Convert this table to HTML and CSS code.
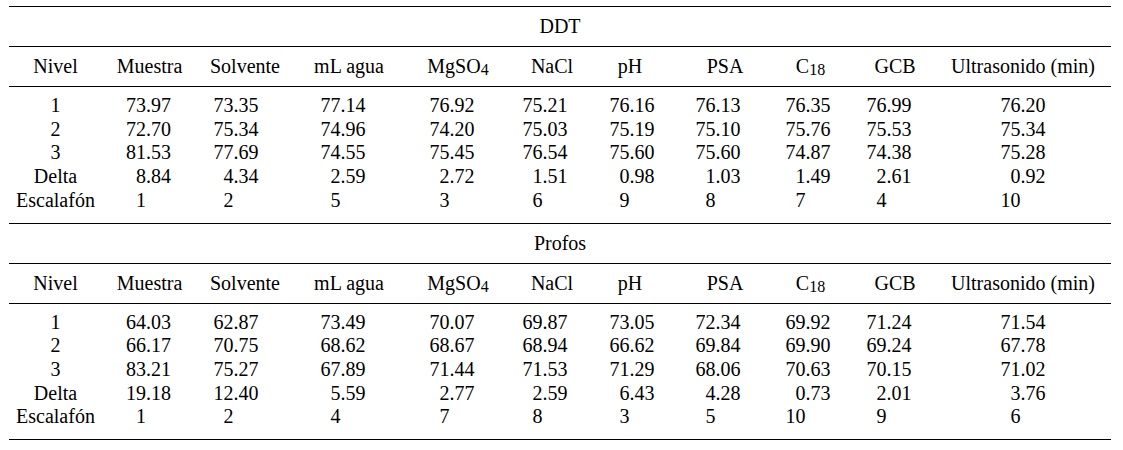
FILE: index.html
```html
<!DOCTYPE html>
<html lang="es">
<head>
<meta charset="utf-8">
<title>DDT y Profos</title>
<link rel="stylesheet" href="styles.css">
</head>
<body>
<div class="wrap">
  <section class="block">
    <div class="cap">DDT</div>
    <div class="hd">
      <span>Nivel</span><span>Muestra</span><span>Solvente</span><span>mL agua</span><span>MgSO<sub>4</sub></span><span>NaCl</span><span>pH</span><span>PSA</span><span>C<sub>18</sub></span><span>GCB</span><span>Ultrasonido (min)</span>
    </div>
    <div class="bd">
      <div class="r"><span>1</span><span><b class="n"><i>73</i><i>.97</i></b></span><span><b class="n"><i>73</i><i>.35</i></b></span><span><b class="n"><i>77</i><i>.14</i></b></span><span><b class="n"><i>76</i><i>.92</i></b></span><span><b class="n"><i>75</i><i>.21</i></b></span><span><b class="n"><i>76</i><i>.16</i></b></span><span><b class="n"><i>76</i><i>.13</i></b></span><span><b class="n"><i>76</i><i>.35</i></b></span><span><b class="n"><i>76</i><i>.99</i></b></span><span><b class="n"><i>76</i><i>.20</i></b></span></div>
      <div class="r"><span>2</span><span><b class="n"><i>72</i><i>.70</i></b></span><span><b class="n"><i>75</i><i>.34</i></b></span><span><b class="n"><i>74</i><i>.96</i></b></span><span><b class="n"><i>74</i><i>.20</i></b></span><span><b class="n"><i>75</i><i>.03</i></b></span><span><b class="n"><i>75</i><i>.19</i></b></span><span><b class="n"><i>75</i><i>.10</i></b></span><span><b class="n"><i>75</i><i>.76</i></b></span><span><b class="n"><i>75</i><i>.53</i></b></span><span><b class="n"><i>75</i><i>.34</i></b></span></div>
      <div class="r"><span>3</span><span><b class="n"><i>81</i><i>.53</i></b></span><span><b class="n"><i>77</i><i>.69</i></b></span><span><b class="n"><i>74</i><i>.55</i></b></span><span><b class="n"><i>75</i><i>.45</i></b></span><span><b class="n"><i>76</i><i>.54</i></b></span><span><b class="n"><i>75</i><i>.60</i></b></span><span><b class="n"><i>75</i><i>.60</i></b></span><span><b class="n"><i>74</i><i>.87</i></b></span><span><b class="n"><i>74</i><i>.38</i></b></span><span><b class="n"><i>75</i><i>.28</i></b></span></div>
      <div class="r"><span>Delta</span><span><b class="n"><i>8</i><i>.84</i></b></span><span><b class="n"><i>4</i><i>.34</i></b></span><span><b class="n"><i>2</i><i>.59</i></b></span><span><b class="n"><i>2</i><i>.72</i></b></span><span><b class="n"><i>1</i><i>.51</i></b></span><span><b class="n"><i>0</i><i>.98</i></b></span><span><b class="n"><i>1</i><i>.03</i></b></span><span><b class="n"><i>1</i><i>.49</i></b></span><span><b class="n"><i>2</i><i>.61</i></b></span><span><b class="n"><i>0</i><i>.92</i></b></span></div>
      <div class="r"><span>Escalafón</span><span><b class="n"><i>1</i><i></i></b></span><span><b class="n"><i>2</i><i></i></b></span><span><b class="n"><i>5</i><i></i></b></span><span><b class="n"><i>3</i><i></i></b></span><span><b class="n"><i>6</i><i></i></b></span><span><b class="n"><i>9</i><i></i></b></span><span><b class="n"><i>8</i><i></i></b></span><span><b class="n"><i>7</i><i></i></b></span><span><b class="n"><i>4</i><i></i></b></span><span><b class="n"><i>10</i><i></i></b></span></div>
    </div>
  </section>
  <section class="block">
    <div class="cap">Profos</div>
    <div class="hd">
      <span>Nivel</span><span>Muestra</span><span>Solvente</span><span>mL agua</span><span>MgSO<sub>4</sub></span><span>NaCl</span><span>pH</span><span>PSA</span><span>C<sub>18</sub></span><span>GCB</span><span>Ultrasonido (min)</span>
    </div>
    <div class="bd">
      <div class="r"><span>1</span><span><b class="n"><i>64</i><i>.03</i></b></span><span><b class="n"><i>62</i><i>.87</i></b></span><span><b class="n"><i>73</i><i>.49</i></b></span><span><b class="n"><i>70</i><i>.07</i></b></span><span><b class="n"><i>69</i><i>.87</i></b></span><span><b class="n"><i>73</i><i>.05</i></b></span><span><b class="n"><i>72</i><i>.34</i></b></span><span><b class="n"><i>69</i><i>.92</i></b></span><span><b class="n"><i>71</i><i>.24</i></b></span><span><b class="n"><i>71</i><i>.54</i></b></span></div>
      <div class="r"><span>2</span><span><b class="n"><i>66</i><i>.17</i></b></span><span><b class="n"><i>70</i><i>.75</i></b></span><span><b class="n"><i>68</i><i>.62</i></b></span><span><b class="n"><i>68</i><i>.67</i></b></span><span><b class="n"><i>68</i><i>.94</i></b></span><span><b class="n"><i>66</i><i>.62</i></b></span><span><b class="n"><i>69</i><i>.84</i></b></span><span><b class="n"><i>69</i><i>.90</i></b></span><span><b class="n"><i>69</i><i>.24</i></b></span><span><b class="n"><i>67</i><i>.78</i></b></span></div>
      <div class="r"><span>3</span><span><b class="n"><i>83</i><i>.21</i></b></span><span><b class="n"><i>75</i><i>.27</i></b></span><span><b class="n"><i>67</i><i>.89</i></b></span><span><b class="n"><i>71</i><i>.44</i></b></span><span><b class="n"><i>71</i><i>.53</i></b></span><span><b class="n"><i>71</i><i>.29</i></b></span><span><b class="n"><i>68</i><i>.06</i></b></span><span><b class="n"><i>70</i><i>.63</i></b></span><span><b class="n"><i>70</i><i>.15</i></b></span><span><b class="n"><i>71</i><i>.02</i></b></span></div>
      <div class="r"><span>Delta</span><span><b class="n"><i>19</i><i>.18</i></b></span><span><b class="n"><i>12</i><i>.40</i></b></span><span><b class="n"><i>5</i><i>.59</i></b></span><span><b class="n"><i>2</i><i>.77</i></b></span><span><b class="n"><i>2</i><i>.59</i></b></span><span><b class="n"><i>6</i><i>.43</i></b></span><span><b class="n"><i>4</i><i>.28</i></b></span><span><b class="n"><i>0</i><i>.73</i></b></span><span><b class="n"><i>2</i><i>.01</i></b></span><span><b class="n"><i>3</i><i>.76</i></b></span></div>
      <div class="r"><span>Escalafón</span><span><b class="n"><i>1</i><i></i></b></span><span><b class="n"><i>2</i><i></i></b></span><span><b class="n"><i>4</i><i></i></b></span><span><b class="n"><i>7</i><i></i></b></span><span><b class="n"><i>8</i><i></i></b></span><span><b class="n"><i>3</i><i></i></b></span><span><b class="n"><i>5</i><i></i></b></span><span><b class="n"><i>10</i><i></i></b></span><span><b class="n"><i>9</i><i></i></b></span><span><b class="n"><i>6</i><i></i></b></span></div>
    </div>
  </section>
</div>
</body>
</html>
```
FILE: styles.css
```css
html, body {
  margin: 0;
  padding: 0;
  background: #fff;
}

body {
  font-family: "Liberation Serif", "Times New Roman", serif;
  font-size: 20px;
  color: #000;
}

.wrap {
  margin: 6px 0 0 9px;
  width: 1102px;
  border-top: 1px solid #000;
}

.block {
  border-bottom: 1px solid #000;
}

.cap {
  height: 39px;
  line-height: 39px;
  text-align: center;
  border-bottom: 1px solid #000;
}

.hd,
.r {
  display: grid;
  grid-template-columns: 93px 95px 100px 106px 102px 86px 86px 91px 85px 92px 166px;
}

.hd {
  height: 39px;
  line-height: 39px;
  border-bottom: 1px solid #000;
}

.hd > span,
.r > span {
  display: block;
  text-align: center;
  white-space: nowrap;
}

.hd sub {
  font-size: 0.8em;
  line-height: 0;
  vertical-align: -0.1em;
}

.bd {
  padding: 7px 0 10px;
}

.r {
  line-height: 23.7px;
}

.n {
  display: inline-flex;
  font-weight: normal;
}

.n > i {
  font-style: normal;
  display: block;
}

.n > i:first-child {
  width: 1em;
  text-align: right;
}

.n > i:last-child {
  width: 1.25em;
  text-align: left;
}

/* header column offsets */
.hd > :nth-child(3) { padding-right: 4px; }
.hd > :nth-child(4) { padding-right: 2px; }
.hd > :nth-child(5) { padding-left: 8px; }
.hd > :nth-child(6) { padding-left: 8px; }
.hd > :nth-child(7) { padding-right: 8px; }
.hd > :nth-child(8) { padding-left: 5px; }
.hd > :nth-child(10) { padding-right: 8px; }
.hd > :nth-child(11) { padding-right: 10px; }

/* data column offsets */
.r > :nth-child(2) { padding-right: 2px; }
.r > :nth-child(3) { padding-right: 22px; }
.r > :nth-child(4) { padding-right: 14px; }
.r > :nth-child(5) { padding-right: 4px; }
.r > :nth-child(6) { padding-right: 6px; }
.r > :nth-child(7) { padding-right: 4px; }
.r > :nth-child(8) { padding-right: 9px; }
.r > :nth-child(9) { padding-right: 5px; }
.r > :nth-child(10) { padding-right: 20px; }
.r > :nth-child(11) { padding-right: 10px; }
```
